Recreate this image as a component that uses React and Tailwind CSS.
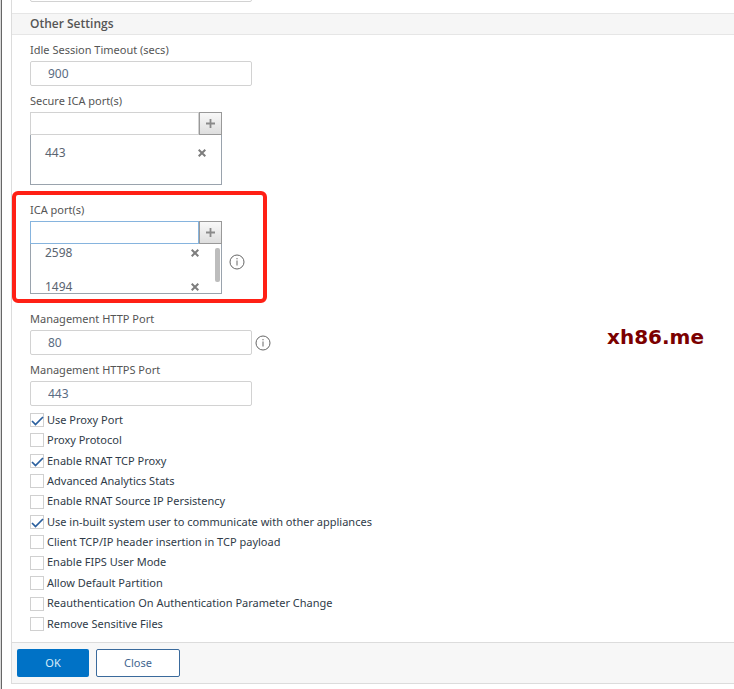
import { useState } from 'react';

const OPTIONS = [
  { id: 'useProxyPort', label: 'Use Proxy Port', on: true },
  { id: 'proxyProtocol', label: 'Proxy Protocol', on: false },
  { id: 'rnatTcpProxy', label: 'Enable RNAT TCP Proxy', on: true },
  { id: 'advAnalytics', label: 'Advanced Analytics Stats', on: false },
  { id: 'rnatPersistency', label: 'Enable RNAT Source IP Persistency', on: false },
  { id: 'inbuiltUser', label: 'Use in-built system user to communicate with other appliances', on: true },
  { id: 'clientHeader', label: 'Client TCP/IP header insertion in TCP payload', on: false },
  { id: 'fipsUser', label: 'Enable FIPS User Mode', on: false },
  { id: 'defaultPartition', label: 'Allow Default Partition', on: false },
  { id: 'reauth', label: 'Reauthentication On Authentication Parameter Change', on: false },
  { id: 'removeFiles', label: 'Remove Sensitive Files', on: false },
];

const InfoIcon = ({ className = '' }) => (
  <svg className={`w-4 h-4 shrink-0 ${className}`} viewBox="0 0 16 16" fill="none" stroke="#666" strokeWidth="1">
    <circle cx="8" cy="8" r="7" />
    <path d="M8 6.5v5M8 4v1.3" />
  </svg>
);

const CrossIcon = () => (
  <svg className="w-2 h-2" viewBox="0 0 8 8" stroke="#7d7d7d" strokeWidth="2">
    <path d="M0.7 0.7l6.6 6.6M7.3 0.7L0.7 7.3" />
  </svg>
);

const TextField = ({ id, label, defaultValue, info }) => (
  <div>
    <label htmlFor={id} className="block h-4 leading-4 mb-[3px]">{label}</label>
    <div className="flex items-center gap-[3px]">
      <input
        id={id}
        defaultValue={defaultValue}
        className="w-[222px] h-[25px] px-[17px] border border-[#d2d2d2] rounded-xs bg-white text-xs text-[#5a6b82] outline-none"
      />
      {info && <InfoIcon />}
    </div>
  </div>
);

const PortList = ({ id, label, initial, active, scroll, info, marked }) => {
  const [ports, setPorts] = useState(initial);
  const [value, setValue] = useState('');

  const addPort = () => {
    if (!value) return;
    setPorts([...ports, value]);
    setValue('');
  };

  return (
    <div className="relative mb-[10px]">
      <label htmlFor={id} className="block h-4 leading-4 mb-[3px]">{label}</label>
      <div className="flex items-end gap-[7px]">
        <div className="w-48">
          <div className="flex h-[23px]">
            <input
              id={id}
              value={value}
              onChange={e => setValue(e.target.value)}
              className={`flex-1 min-w-0 px-4 border outline-none bg-white text-xs ${active ? 'border-[#86b4de]' : 'border-[#d2d2d2]'}`}
            />
            <button
              type="button"
              aria-label="Add port"
              onClick={addPort}
              className="w-[23px] flex items-center justify-center border border-[#999] bg-linear-to-b from-[#f8f8f8] to-[#dedede]"
            >
              <svg className="w-[9px] h-[9px]" viewBox="0 0 9 9" stroke="#8a8a8a" strokeWidth="1.8">
                <path d="M4.5 0v9M0 4.5h9" />
              </svg>
            </button>
          </div>
          <div className="relative h-[50px] overflow-hidden border border-t-0 border-[#9aa3ad]">
            <ul className={scroll ? 'pl-[14px] pr-[22px]' : 'pl-[14px] pr-[15px] pt-[9px]'}>
              {ports.map(port => (
                <li key={port} className="h-[34px] flex items-start justify-between text-xs text-[#5a6470]">
                  <span className="leading-[18px]">{port}</span>
                  <button type="button" aria-label={`Remove ${port}`} className="h-[18px] flex items-center" onClick={() => setPorts(ports.filter(p => p !== port))}>
                    <CrossIcon />
                  </button>
                </li>
              ))}
            </ul>
            {scroll && <div className="absolute right-px top-1 w-[5px] h-[34px] rounded-xs bg-[#bdbdbd]" />}
          </div>
        </div>
        {info && <InfoIcon className="mb-6" />}
      </div>
      {marked && <div className="absolute -left-[18px] -top-[11px] w-[255px] h-[112px] border-4 border-[#ff2015] rounded-md pointer-events-none" />}
    </div>
  );
};

const App = () => {
  const [checked, setChecked] = useState(OPTIONS.filter(o => o.on).map(o => o.id));

  const toggle = (id) => {
    setChecked(checked.includes(id) ? checked.filter(c => c !== id) : [...checked, id]);
  };

  return (
    <div className="relative min-h-screen flex bg-white font-['Noto_Sans',sans-serif] text-[11px] text-[#555]">
      <div className="w-[2px] shrink-0 bg-[#d8d8d8] border-r border-[#666]" />
      <form className="flex-1 ml-[9px] self-start border-l border-b border-[#dcdcdc]" onSubmit={e => e.preventDefault()}>
        <div className="h-[2px] mb-[11px] ml-[18px] flex items-end overflow-hidden">
          <input aria-label="Previous setting" className="w-[222px] h-6 shrink-0 border border-[#d2d2d2] rounded-xs" />
        </div>
        <h2 className="h-[22px] leading-5 pl-[18px] font-['Open_Sans',sans-serif] text-xs/5 font-semibold bg-[#f6f6f6] border-y border-[#e6e6e6]">Other Settings</h2>

        <div className="pt-[7px] pl-[18px] pb-2">
          <div className="flex flex-col gap-[7px] mb-1">
            <TextField id="idle" label="Idle Session Timeout (secs)" defaultValue="900" />
            <PortList id="secureIca" label="Secure ICA port(s)" initial={['443']} />
            <PortList id="ica" label="ICA port(s)" initial={['2598', '1494']} active scroll info marked />
            <TextField id="http" label="Management HTTP Port" defaultValue="80" info />
            <TextField id="https" label="Management HTTPS Port" defaultValue="443" />
          </div>

          <div className="h-[224px] flex flex-col justify-between">
            {OPTIONS.map(({ id, label }) => (
              <label key={id} className="h-5 flex items-center gap-[3px] self-start text-[#2f3b48]">
                <span className="relative w-[14px] h-[14px]">
                  <input
                    type="checkbox"
                    checked={checked.includes(id)}
                    onChange={() => toggle(id)}
                    className="block appearance-none w-[14px] h-[14px] border border-[#d0d0d0] bg-white"
                  />
                  {checked.includes(id) && (
                    <svg className="absolute inset-0 pointer-events-none" viewBox="0 0 14 14" fill="none" stroke="#2a5f9e" strokeWidth="1.7">
                      <path d="M2 8l3.5 3.5L13 4" />
                    </svg>
                  )}
                </span>
                {label}
              </label>
            ))}
          </div>
        </div>

        <div className="h-[41px] flex items-center gap-[7px] pl-[5px] bg-[#f7f7f7] border-t border-[#dcdcdc]">
          <button type="submit" className="w-[72px] h-7 rounded-xs bg-[#0072c6] text-[#d9ebf8]">OK</button>
          <button type="button" className="w-[84px] h-7 rounded-xs bg-white border border-[#3a6a9c] text-[#3f6690]">Close</button>
        </div>
      </form>

      <div className="absolute right-[30px] top-[323px] font-['DejaVu_Sans',sans-serif] text-xl leading-7 font-bold text-[#7b0000]">xh86.me</div>
    </div>
  );
};

export default App;
